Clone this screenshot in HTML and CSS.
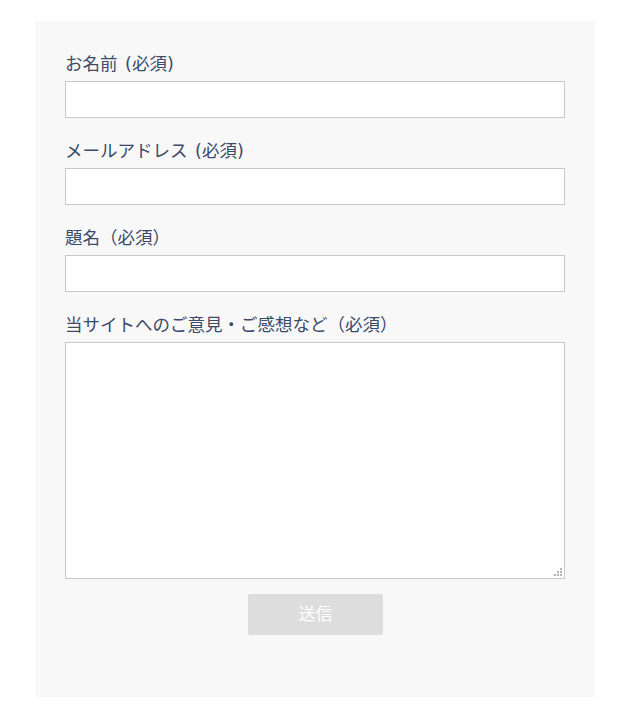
FILE: index.html
```html
<!DOCTYPE html>
<html lang="ja">
<head>
<meta charset="utf-8">
<title>お問い合わせ</title>
<link rel="stylesheet" href="styles.css">
</head>
<body>
<form class="panel">
  <div class="field">
    <label class="label">お名前 (必須)</label>
    <input class="input" type="text">
  </div>
  <div class="field">
    <label class="label">メールアドレス (必須)</label>
    <input class="input" type="email">
  </div>
  <div class="field">
    <label class="label">題名（必須）</label>
    <input class="input" type="text">
  </div>
  <div class="field field-last">
    <label class="label">当サイトへのご意見・ご感想など（必須）</label>
    <div class="area-wrap">
      <textarea class="area"></textarea>
      <svg class="grip" width="8" height="8" viewBox="0 0 8 8" aria-hidden="true">
        <rect x="6" y="0" width="2" height="2" fill="#b4b4b4"/>
        <rect x="3" y="3" width="2" height="2" fill="#b4b4b4"/>
        <rect x="6" y="3" width="2" height="2" fill="#b4b4b4"/>
        <rect x="0" y="6" width="2" height="2" fill="#b4b4b4"/>
        <rect x="3" y="6" width="2" height="2" fill="#b4b4b4"/>
        <rect x="6" y="6" width="2" height="2" fill="#b4b4b4"/>
      </svg>
    </div>
  </div>
  <div class="actions">
    <button class="submit" type="button">送信</button>
  </div>
</form>
</body>
</html>
```

FILE: styles.css
```css
html, body {
  margin: 0;
  padding: 0;
  background: #ffffff;
}

body {
  font-family: "DejaVu Sans", "Noto Sans CJK JP", sans-serif;
  font-size: 17.5px;
  color: #3b4a69;
}

.panel {
  box-sizing: border-box;
  width: 560px;
  margin: 21px 0 0 35px;
  padding: 30px 30px 62px;
  background: #f8f8f8;
  display: flex;
  flex-direction: column;
}

.field {
  display: flex;
  flex-direction: column;
  margin-bottom: 20px;
}

.field-last {
  margin-bottom: 15px;
}

.label {
  display: block;
  line-height: 26px;
  height: 26px;
  margin-bottom: 4px;
  font-size: 17.5px;
  word-spacing: 2px;
  color: #3b4a69;
}

.input {
  box-sizing: border-box;
  display: block;
  width: 500px;
  height: 37px;
  margin: 0;
  padding: 4px 8px;
  border: 1px solid #c9c9c9;
  border-radius: 0;
  background: #ffffff;
  font: inherit;
  outline: none;
}

.area-wrap {
  position: relative;
  width: 500px;
  height: 237px;
}

.area {
  box-sizing: border-box;
  display: block;
  width: 500px;
  height: 237px;
  margin: 0;
  padding: 6px 8px;
  border: 1px solid #c9c9c9;
  border-radius: 0;
  background: #ffffff;
  font: inherit;
  resize: none;
  outline: none;
}

.grip {
  position: absolute;
  right: 3px;
  bottom: 3px;
}

.actions {
  display: flex;
  justify-content: center;
}

.submit {
  box-sizing: border-box;
  width: 135px;
  height: 41px;
  margin: 0 0 0 1px;
  padding: 0 0 3px;
  border: none;
  border-radius: 2px;
  background: #dddddd;
  color: #ffffff;
  font-family: "Noto Sans CJK JP", sans-serif;
  font-size: 17px;
  line-height: 38px;
  cursor: pointer;
}
```
